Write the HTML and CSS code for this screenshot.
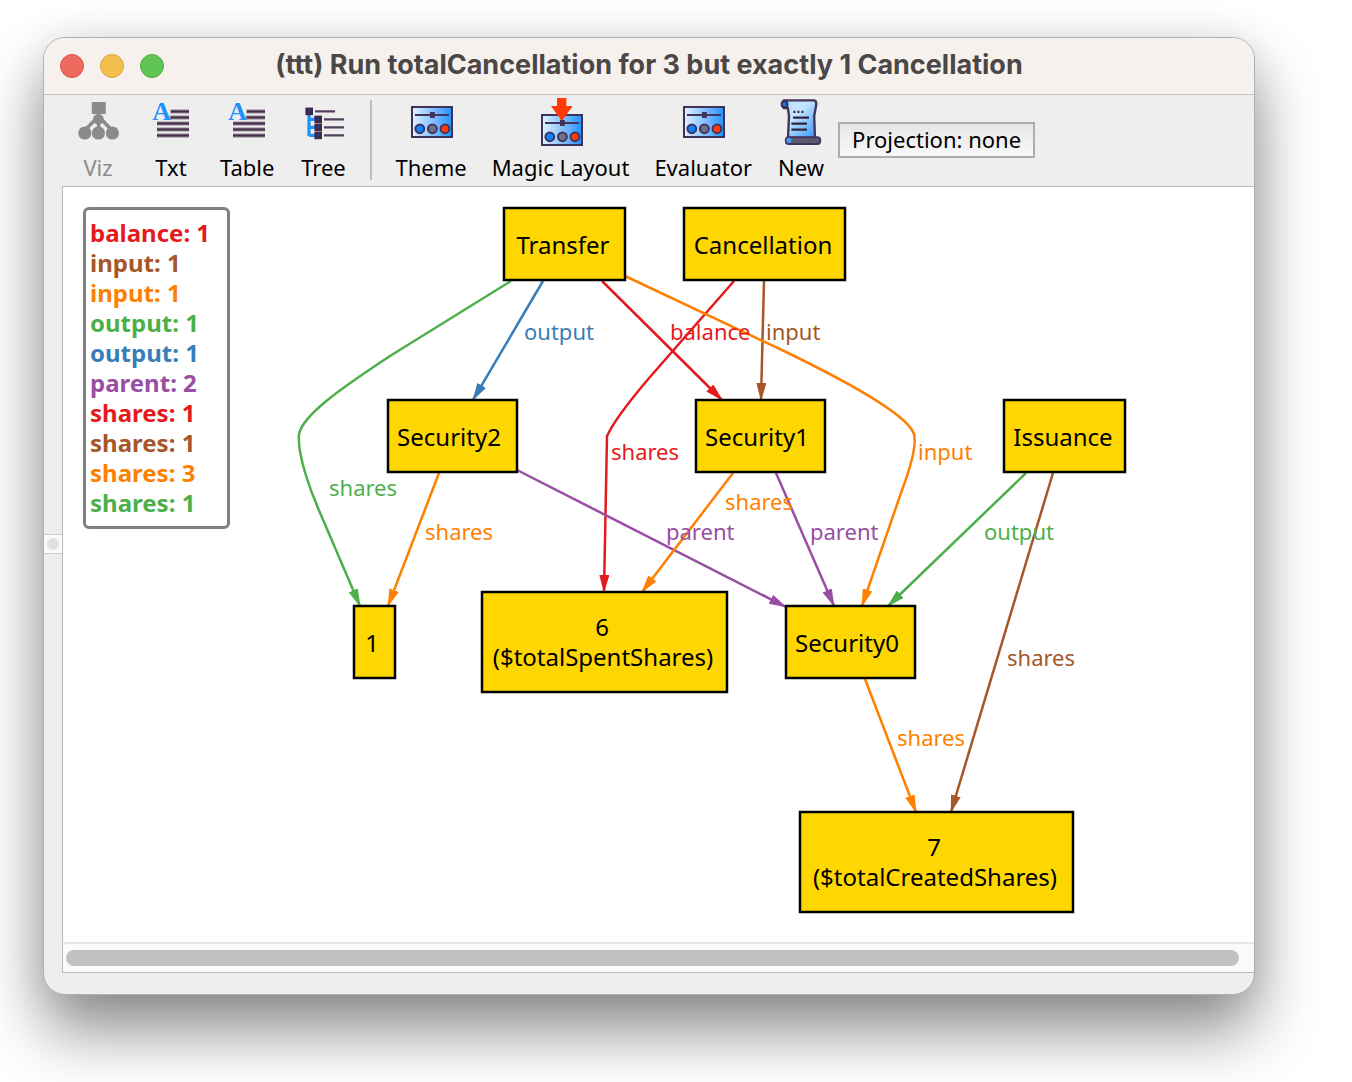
FILE: index.html
```html
<!DOCTYPE html>
<html lang="en">
<head>
<meta charset="utf-8">
<title>(ttt) Run totalCancellation for 3 but exactly 1 Cancellation</title>
<link rel="stylesheet" href="styles.css">
</head>
<body>
<svg class="defs" aria-hidden="true">
  <defs>
    <linearGradient id="panel" x1="0" y1="0" x2="1" y2="0">
      <stop offset="0" stop-color="#e4f3ff"/><stop offset="1" stop-color="#2590ff"/>
    </linearGradient>
    <linearGradient id="paper" x1="0" y1="0" x2="1" y2="1">
      <stop offset="0" stop-color="#b4dcff"/><stop offset=".4" stop-color="#c6e6ff"/><stop offset="1" stop-color="#2a94ff"/>
    </linearGradient>
    <symbol id="icon-text" viewBox="0 0 24 24">
      <text class="glyph" x="2.6" y="11">A</text>
      <path d="M11.7 6.7H21M11.2 9.7H21M5 12.7H21M5 15.7H21M5 18.7H21" stroke="#8f8390" stroke-width="2"/>
      <path d="M12 6.7H21M12 9.7H21M5 12.7H21M5 15.7H21M5 18.7H21" stroke="#46304c" stroke-width="1"/>
    </symbol>
    <symbol id="icon-panel" viewBox="0 0 24 24">
      <rect x="2.5" y="4.5" width="20" height="15" fill="url(#panel)" stroke="#3f3358"/>
      <path d="M4 8.5H21" stroke="#41335a"/>
      <path d="M12.7 7V10" stroke="#41335a" stroke-width="2.4"/>
      <g stroke="#41335a">
        <circle cx="6.4" cy="15.4" r="2.2" fill="#0a84ff"/>
        <circle cx="12.7" cy="15.4" r="2.2" fill="#6e7288"/>
        <circle cx="19" cy="15.4" r="2.2" fill="#ff3b0a"/>
      </g>
    </symbol>
  </defs>
</svg>

<main class="window">
  <header class="titlebar">
    <div class="lights">
      <button class="light close" aria-label="Close"></button>
      <button class="light minimize" aria-label="Minimize"></button>
      <button class="light zoom" aria-label="Zoom"></button>
    </div>
    <h1 class="title">(ttt) Run totalCancellation for 3 but exactly 1 Cancellation</h1>
  </header>

  <div class="body">
    <div class="gutter"><div class="handle"><span class="grip"></span></div></div>
    <div class="content">
      <nav class="toolbar">
        <button class="tool" disabled>
          <svg class="icon" viewBox="0 0 24 24" aria-hidden="true">
            <g fill="#8b8b8b" stroke="#8b8b8b">
              <path d="M12.3 8V16M11 10.5L5 16.5M13.5 10.5L19.3 16.5" fill="none" stroke-width="1.8"/>
              <rect x="9.4" y="2.5" width="6" height="5"/>
              <circle cx="12.2" cy="10.6" r="2.2"/>
              <circle cx="5.4" cy="17.5" r="2.8"/><circle cx="12.2" cy="17.5" r="2.8"/><circle cx="19.2" cy="17.5" r="2.8"/>
            </g>
          </svg>
          <span>Viz</span>
        </button>
        <button class="tool"><svg class="icon" aria-hidden="true"><use href="#icon-text"/></svg><span>Txt</span></button>
        <button class="tool"><svg class="icon" aria-hidden="true"><use href="#icon-text"/></svg><span>Table</span></button>
        <button class="tool">
          <svg class="icon" viewBox="0 0 24 24" aria-hidden="true">
            <path d="M5 8V19M5 10.7H8M5 14.7H8M5 18.7H8" fill="none" stroke="#1e90ff" stroke-width="1.6"/>
            <path d="M8 6.7H18M12.5 10.7H22.5M12.5 14.7H22.5M12.5 18.7H22.5" stroke="#54405c" stroke-width="1.2"/>
            <g fill="#0a52c8" stroke="#3c2b4c" stroke-width="1.6">
              <rect x="4" y="5.6" width="2.2" height="2.2"/>
              <rect x="8.5" y="9.6" width="2.2" height="2.2"/>
              <rect x="8.5" y="13.6" width="2.2" height="2.2"/>
              <rect x="8.5" y="17.6" width="2.2" height="2.2"/>
            </g>
          </svg>
          <span>Tree</span>
        </button>
        <span class="separator"></span>
        <button class="tool"><svg class="icon" aria-hidden="true"><use href="#icon-panel"/></svg><span>Theme</span></button>
        <button class="tool">
          <svg class="icon" viewBox="0 0 24 24" aria-hidden="true">
            <use href="#icon-panel" y="4" width="24" height="24"/>
            <path d="M10 0H14.7V4H17.8L12.8 11H12L7 4H10Z" fill="#ff3a08"/>
          </svg>
          <span>Magic Layout</span>
        </button>
        <button class="tool"><svg class="icon" aria-hidden="true"><use href="#icon-panel"/></svg><span>Evaluator</span></button>
        <button class="tool">
          <svg class="icon" viewBox="0 0 24 24" aria-hidden="true">
            <path d="M3.5 1.2H18.6Q20 1.6 19.5 4L18.6 9L19 20H5.5L6 9L5.4 5H3.4Q1.6 3 3.5 1.2Z" fill="url(#paper)" stroke="#46345a" stroke-width="1.2"/>
            <circle cx="3.8" cy="3.1" r="1.5" fill="#0a7cf0" stroke="#3c2b4c" stroke-width=".9"/>
            <rect x="4.4" y="19.6" width="17.2" height="3.4" rx="1.5" fill="#5d5a70" stroke="#46345a"/>
            <circle cx="6" cy="21.2" r="1.3" fill="#3b9dff"/>
            <path d="M8.2 6.9H9.2M10.2 6.9H11.2M12.2 6.9H13.2M8 9.8H16M7.2 12.8H15M7.2 15.8H15" stroke="#33243f" stroke-width="1.1"/>
          </svg>
          <span>New</span>
        </button>
        <button class="projection">Projection: none</button>
      </nav>

      <section class="canvas">
        <ul class="legend">
          <li class="red">balance: 1</li>
          <li class="brown">input: 1</li>
          <li class="orange">input: 1</li>
          <li class="green">output: 1</li>
          <li class="blue">output: 1</li>
          <li class="purple">parent: 2</li>
          <li class="red">shares: 1</li>
          <li class="brown">shares: 1</li>
          <li class="orange">shares: 3</li>
          <li class="green">shares: 1</li>
        </ul>
        <svg class="graph" width="1190" height="755" viewBox="63 187 1190 755" role="img" aria-label="Instance graph">
          <defs>
            <marker id="tip-red" class="red" markerUnits="userSpaceOnUse" markerWidth="18" markerHeight="10" refX="17" refY="5" orient="auto"><path d="M0 0L18 5L0 10Z"/></marker>
            <marker id="tip-brown" class="brown" markerUnits="userSpaceOnUse" markerWidth="18" markerHeight="10" refX="17" refY="5" orient="auto"><path d="M0 0L18 5L0 10Z"/></marker>
            <marker id="tip-orange" class="orange" markerUnits="userSpaceOnUse" markerWidth="18" markerHeight="10" refX="17" refY="5" orient="auto"><path d="M0 0L18 5L0 10Z"/></marker>
            <marker id="tip-green" class="green" markerUnits="userSpaceOnUse" markerWidth="18" markerHeight="10" refX="17" refY="5" orient="auto"><path d="M0 0L18 5L0 10Z"/></marker>
            <marker id="tip-blue" class="blue" markerUnits="userSpaceOnUse" markerWidth="18" markerHeight="10" refX="17" refY="5" orient="auto"><path d="M0 0L18 5L0 10Z"/></marker>
            <marker id="tip-purple" class="purple" markerUnits="userSpaceOnUse" markerWidth="18" markerHeight="10" refX="17" refY="5" orient="auto"><path d="M0 0L18 5L0 10Z"/></marker>
          </defs>

          <g class="edges">
            <path class="red" marker-end="url(#tip-red)" d="M602 281L722 400"/>
            <path class="red" marker-end="url(#tip-red)" d="M734 281L650 377C632 398 614 421 607 436L604 592"/>
            <path class="brown" marker-end="url(#tip-brown)" d="M764 281L761 400"/>
            <path class="brown" marker-end="url(#tip-brown)" d="M1053 473L951 812"/>
            <path class="green" marker-end="url(#tip-green)" d="M511 281L390 356C340 389 303 415 299 434C297 456 312 494 318 508L360 606"/>
            <path class="green" marker-end="url(#tip-green)" d="M1026 473L888 606"/>
            <path class="blue" marker-end="url(#tip-blue)" d="M543 281L473 400"/>
            <path class="purple" marker-end="url(#tip-purple)" d="M517 470L786 607"/>
            <path class="purple" marker-end="url(#tip-purple)" d="M776 473L834 606"/>
            <path class="orange" marker-end="url(#tip-orange)" d="M625 276L784 351C850 383 908 416 914 434C917 446 908 474 902 490L862 606"/>
            <path class="orange" marker-end="url(#tip-orange)" d="M733 473L642 592"/>
            <path class="orange" marker-end="url(#tip-orange)" d="M439 473L388 606"/>
            <path class="orange" marker-end="url(#tip-orange)" d="M865 679L916 812"/>
          </g>

          <g class="labels">
            <text class="blue" x="524" y="340">output</text>
            <text class="red" x="670" y="340">balance</text>
            <text class="brown" x="766" y="340">input</text>
            <text class="red" x="611" y="460">shares</text>
            <text class="orange" x="918" y="460">input</text>
            <text class="green" x="329" y="496">shares</text>
            <text class="orange" x="725" y="510">shares</text>
            <text class="orange" x="425" y="540">shares</text>
            <text class="purple" x="666" y="540">parent</text>
            <text class="purple" x="810" y="540">parent</text>
            <text class="green" x="984" y="540">output</text>
            <text class="brown" x="1007" y="666">shares</text>
            <text class="orange" x="897" y="746">shares</text>
          </g>

          <g class="nodes">
            <rect x="504" y="208" width="121" height="72"/><text x="563" y="254">Transfer</text>
            <rect x="684" y="208" width="161" height="72"/><text x="763" y="254">Cancellation</text>
            <rect x="388" y="400" width="129" height="72"/><text x="449" y="446">Security2</text>
            <rect x="696" y="400" width="129" height="72"/><text x="757" y="446">Security1</text>
            <rect x="1004" y="400" width="121" height="72"/><text x="1063" y="446">Issuance</text>
            <rect x="354" y="606" width="41" height="72"/><text x="372" y="652">1</text>
            <rect x="482" y="592" width="245" height="100"/><text x="602" y="636">6</text><text x="603" y="666">($totalSpentShares)</text>
            <rect x="786" y="606" width="129" height="72"/><text x="847" y="652">Security0</text>
            <rect x="800" y="812" width="273" height="100"/><text x="934" y="856">7</text><text x="935" y="886">($totalCreatedShares)</text>
          </g>
        </svg>
      </section>
      <div class="scrollbar"><div class="thumb"></div></div>
    </div>
  </div>
</main>
</body>
</html>
```
FILE: styles.css
```css
* { box-sizing: border-box; }

body {
  margin: 0;
  min-height: 100vh;
  padding: 37px 97px 87px 43px;
  display: flex;
  background: #fff;
  font-family: "Noto Sans", "Open Sans", sans-serif;
  color: #000;
  overflow: hidden;
}

button {
  font: inherit;
  color: inherit;
  background: none;
  border: 0;
  padding: 0;
}

.defs { position: absolute; width: 0; height: 0; }

.window {
  flex: 1;
  min-width: 0;
  display: flex;
  flex-direction: column;
  border: 1px solid #b0b0b0;
  border-radius: 22px;
  background: #eee;
  overflow: hidden;
  box-shadow: 0 36px 64px rgba(0, 0, 0, .45), 0 0 40px rgba(0, 0, 0, .08);
}

/* Title bar */
.titlebar {
  display: grid;
  grid-template-columns: 168px 1fr 168px;
  align-items: center;
  height: 57px;
  border-bottom: 1px solid #c4c2c1;
  background: #f7f1ee;
}
.lights { display: flex; gap: 16px; padding-left: 16px; }
.light { width: 24px; height: 24px; border-radius: 50%; border: 1px solid; }
.close { background: #ed6a5e; border-color: #d9574c; }
.minimize { background: #f5bf4f; border-color: #dba53c; }
.zoom { background: #61c554; border-color: #52ac42; }
.title {
  margin: 0;
  padding-bottom: 2px;
  font: bold 27px/32px Inter, "Liberation Sans", sans-serif;
  color: #4a4746;
  text-align: center;
  white-space: nowrap;
}

/* Body */
.body { flex: 1; display: flex; }
.gutter {
  width: 18px;
  display: flex;
  flex-direction: column;
  justify-content: center;
  padding-bottom: 2px;
}
.handle {
  height: 20px;
  display: flex;
  align-items: center;
  justify-content: center;
  border: solid #ccc;
  border-width: 1px 0;
  background: #fbfbfb;
}
.grip { width: 12px; height: 12px; border-radius: 50%; background: #e0e0e0; }
.content {
  flex: 1;
  min-width: 0;
  display: flex;
  flex-direction: column;
  padding-bottom: 21px;
}

/* Toolbar */
.toolbar {
  display: flex;
  align-items: flex-start;
  gap: 1px;
  height: 91px;
  padding-top: 3px;
  font-size: 22px;
  line-height: 30px;
  white-space: nowrap;
}
.tool {
  display: flex;
  flex-direction: column;
  align-items: center;
  gap: 6px;
  min-width: 72px;
  padding: 0 12px;
}
.tool:disabled { color: #8b8b8b; }
.icon { width: 48px; height: 48px; }
.glyph { font: bold 13px "Liberation Serif", serif; fill: #1e90ff; }
.separator { width: 2px; height: 80px; margin: 2px 10px 0; background: #bdbdbd; }
.projection {
  height: 36px;
  margin-top: 24px;
  padding: 0 12px 2px;
  border: 2px solid #adadad;
  background: linear-gradient(#e6e6e6, #f8f8f8);
}

/* Graph */
.canvas {
  flex: 1;
  position: relative;
  border: solid #b9b9b9;
  border-width: 1px 0 0 1px;
  background: #fff;
  overflow: hidden;
}
.graph { display: block; }
.legend {
  position: absolute;
  left: 20px;
  top: 20px;
  width: 147px;
  margin: 0;
  padding: 8px 4px;
  list-style: none;
  border: 3px solid #808080;
  border-radius: 6px;
  font-size: 24px;
  font-weight: bold;
  line-height: 30px;
  white-space: nowrap;
}
.red { color: #e41a1c; }
.brown { color: #a65628; }
.orange { color: #ff7f00; }
.green { color: #4daf4a; }
.blue { color: #377eb8; }
.purple { color: #984ea3; }
.graph marker { fill: currentColor; }
.edges path { fill: none; stroke: currentColor; stroke-width: 2.5; }
.labels text { font-size: 22px; fill: currentColor; }
.nodes rect { fill: #ffd700; stroke: #000; stroke-width: 2.5; }
.nodes text { font-size: 24px; text-anchor: middle; }

.scrollbar {
  height: 31px;
  padding: 6px 15px 6px 3px;
  border: solid #b9b9b9;
  border-width: 2px 0 1px 1px;
  border-top-color: #e6e6e6;
  background: #fafafa;
}
.thumb { height: 16px; border-radius: 8px; background: #c1c1c1; }
```
